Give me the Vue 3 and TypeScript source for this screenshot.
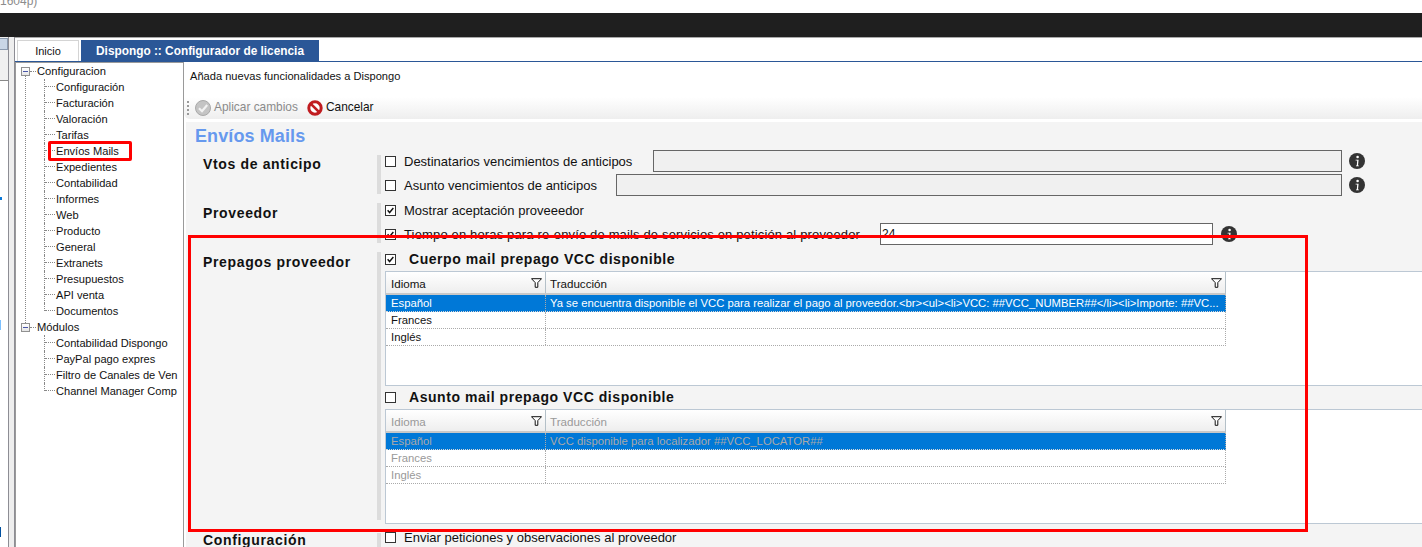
<script setup lang="ts">
const configItems: string[] = ['Configuración','Facturación','Valoración','Tarifas','Envíos Mails','Expedientes','Contabilidad','Informes','Web','Producto','General','Extranets','Presupuestos','API venta','Documentos']
const moduleItems: string[] = ['Contabilidad Dispongo','PayPal pago expres','Filtro de Canales de Ven','Channel Manager Comp']
const rows: string[] = ['Español','Frances','Inglés']
const body = 'Ya se encuentra disponible el VCC para realizar el pago al proveedor.<br><ul><li>VCC: ##VCC_NUMBER##</li><li>Importe: ##VC...'
const subject = 'VCC disponible para localizador ##VCC_LOCATOR##'
const grids = [
  { title: 'Cuerpo mail prepago VCC disponible', checked: true, disabled: false, text: body },
  { title: 'Asunto mail prepago VCC disponible', checked: false, disabled: true, text: subject },
]
</script>

<template>
  <div class="app">
    <div class="titlebar"><span>1604p)</span></div>
    <div class="darkbar"></div>
    <div class="workspace">
      <aside class="dock">
        <div class="dock-head"><span class="dock-close"></span></div>
        <div class="dock-body">
          <i class="mark m1"></i><i class="mark m2"></i><i class="mark m3"></i>
        </div>
      </aside>
      <div class="splitter"></div>
      <div class="main">
        <div class="tabs">
          <div class="tab">Inicio</div>
          <div class="tab active">Dispongo :: Configurador de licencia</div>
        </div>
        <div class="panes">
          <nav class="tree">
            <div class="root has-line">
              <span class="expander"></span><span>Configuracion</span>
            </div>
            <ul class="children cfg">
              <li v-for="item in configItems" :key="item">{{ item }}</li>
            </ul>
            <div class="root">
              <span class="expander"></span><span>Módulos</span>
            </div>
            <ul class="children">
              <li v-for="item in moduleItems" :key="item">{{ item }}</li>
            </ul>
          </nav>
          <section class="content">
            <p class="desc">Añada nuevas funcionalidades a Dispongo</p>
            <div class="toolbar">
              <span class="grip"></span>
              <svg class="tool-icon" viewBox="0 0 16 16">
                <circle cx="8" cy="8" r="7.5" fill="#c4c4c4" stroke="#a8a8a8" />
                <path d="M4 8.2 7 11.2 12.2 5" fill="none" stroke="#f2f2f2" stroke-width="2.2" />
              </svg>
              <span class="tool-label muted">Aplicar cambios</span>
              <svg class="tool-icon cancel" viewBox="0 0 16 16">
                <circle cx="8" cy="8" r="6.2" fill="#fff" stroke="#c01c20" stroke-width="3" />
                <path d="M3.6 3.6 12.4 12.4" stroke="#c01c20" stroke-width="2.6" />
              </svg>
              <span class="tool-label">Cancelar</span>
            </div>
            <div class="sheet">
              <h2 class="sheet-title">Envíos Mails</h2>

              <div class="section">
                <div class="label">Vtos de anticipo</div>
                <div class="bar b1"></div>
                <div class="fields">
                  <div class="row">
                    <span class="check"></span>
                    <span class="text">Destinatarios vencimientos de anticipos</span>
                    <input class="input off i1" disabled />
                    <svg class="info" viewBox="0 0 16 16"><circle cx="8" cy="8" r="8" fill="#333" /><circle cx="8.6" cy="4" r="1.3" fill="#fff" /><path d="M6.6 6.8H9.6L9 12.4H9.9V13.2H7V12.4H7.8L8.2 7.6H6.6Z" fill="#fff" /></svg>
                  </div>
                  <div class="row">
                    <span class="check"></span>
                    <span class="text">Asunto vencimientos de anticipos</span>
                    <input class="input off i2" disabled />
                    <svg class="info" viewBox="0 0 16 16"><circle cx="8" cy="8" r="8" fill="#333" /><circle cx="8.6" cy="4" r="1.3" fill="#fff" /><path d="M6.6 6.8H9.6L9 12.4H9.9V13.2H7V12.4H7.8L8.2 7.6H6.6Z" fill="#fff" /></svg>
                  </div>
                </div>
              </div>

              <div class="section">
                <div class="label">Proveedor</div>
                <div class="bar b2"></div>
                <div class="fields">
                  <div class="row">
                    <span class="check on"><svg viewBox="0 0 11 11"><path d="M2 5.2 4.4 8 9 2.4" fill="none" stroke="#111" stroke-width="1.7" /></svg></span>
                    <span class="text">Mostrar aceptación proveeedor</span>
                  </div>
                  <div class="row">
                    <span class="check on"><svg viewBox="0 0 11 11"><path d="M2 5.2 4.4 8 9 2.4" fill="none" stroke="#111" stroke-width="1.7" /></svg></span>
                    <span class="text wide">Tiempo en horas para re-envío de mails de servicios en petición al proveedor</span>
                    <input class="input i3" value="24" />
                    <svg class="info i-low" viewBox="0 0 16 16"><circle cx="8" cy="8" r="8" fill="#333" /><circle cx="8.6" cy="4" r="1.3" fill="#fff" /><path d="M6.6 6.8H9.6L9 12.4H9.9V13.2H7V12.4H7.8L8.2 7.6H6.6Z" fill="#fff" /></svg>
                  </div>
                </div>
              </div>

              <div class="section third">
                <div class="label">Prepagos proveedor</div>
                <div class="bar b3"></div>
                <div class="fields">
                  <template v-for="g in grids" :key="g.title">
                    <div class="row grid-head">
                      <span class="check" :class="{ on: g.checked }"><svg v-if="g.checked" viewBox="0 0 11 11"><path d="M2 5.2 4.4 8 9 2.4" fill="none" stroke="#111" stroke-width="1.7" /></svg></span>
                      <strong class="grid-title">{{ g.title }}</strong>
                    </div>
                    <div class="grid-band">
                      <div class="grid" :class="{ disabled: g.disabled }">
                        <div class="grid-row header">
                          <div class="cell c1"><span>Idioma</span>
                            <svg class="funnel" viewBox="0 0 11 10"><path d="M.5 .7H10.5L6.8 4.6V9.3H4.2V4.6Z" fill="#fff" stroke="#111" /></svg>
                          </div>
                          <div class="cell c2"><span>Traducción</span>
                            <svg class="funnel" viewBox="0 0 11 10"><path d="M.5 .7H10.5L6.8 4.6V9.3H4.2V4.6Z" fill="#fff" stroke="#111" /></svg>
                          </div>
                        </div>
                        <div v-for="(r, i) in rows" :key="r" class="grid-row data" :class="{ selected: i === 0 }">
                          <div class="cell c1">{{ r }}</div>
                          <div class="cell c2">{{ i === 0 ? g.text : '' }}</div>
                        </div>
                      </div>
                    </div>
                  </template>
                </div>
              </div>

              <div class="section last">
                <div class="label">Configuración</div>
                <div class="bar b4"></div>
                <div class="fields">
                  <div class="row">
                    <span class="check"></span>
                    <span class="text">Enviar peticiones y observaciones al proveedor</span>
                  </div>
                </div>
              </div>
            </div>
          </section>
        </div>
      </div>
      <div class="callout big"></div>
      <div class="callout small"></div>
    </div>
  </div>
</template>

<style>
html, body { margin: 0; background: #fff; overflow: hidden; }
</style>

<style scoped>
.app { position: relative; width: 1422px; height: 547px; overflow: hidden; background: #fff; color: #111; font: 12px/16px "Liberation Sans", Arial, sans-serif; }
.titlebar { height: 13px; overflow: hidden; color: #8c8c8c; font-size: 12px; }
.titlebar span { display: block; margin-top: -7px; line-height: 16px; }
.darkbar { height: 24px; background: #1f1f1f; }
.workspace { display: flex; height: 510px; }
.dock { width: 8px; display: flex; flex-direction: column; }
.dock-head { height: 43px; background: #f0f0f0; padding-top: 1px; box-sizing: border-box; }
.dock-close { display: block; width: 8px; height: 12px; background: #c9d6e6; border: 1px solid #8b9aae; border-left: 0; box-sizing: border-box; }
.dock-body { flex: 1; border-top: 1px solid #888; display: flex; flex-direction: column; }
.mark { display: block; width: 1px; }
.m1 { height: 3px; margin-top: 116px; background: #0a78d8; width: 2px; }
.m2 { height: 10px; margin-top: 120px; background: #7cc0ff; }
.m3 { height: 10px; margin-top: 197px; background: #0050a0; }
.splitter { width: 5px; background: #eeeeee; border-left: 1px solid #8d8d94; border-right: 1px solid #8d8d94; }
.main { flex: 1; min-width: 0; display: flex; flex-direction: column; border-top: 1px solid #a8a8a8; }
.tabs { height: 24px; box-sizing: border-box; display: flex; gap: 2px; padding: 2px 0 0 2px; border-bottom: 1px solid #2b5797; }
.tab { width: 62px; box-sizing: border-box; border: 1px solid #d4d4d4; border-bottom: 0; text-align: center; line-height: 21px; font-size: 11px; }
.tab.active { width: 238px; background: #2b5797; border-color: #2b5797; color: #fff; font-weight: bold; font-size: 11.85px; }
.panes { flex: 1; min-height: 0; display: flex; }
.tree { width: 169px; flex: none; box-sizing: border-box; border: 1px solid #9a9a9a; border-bottom: 0; padding-top: 0; position: relative; overflow: hidden; }
.root { height: 16px; display: flex; align-items: center; padding-left: 5px; position: relative; font-size: 11.2px; white-space: nowrap; }
.expander { width: 9px; height: 9px; box-sizing: border-box; border: 1px solid #919191; background: linear-gradient(#fff, #e6e6e6); margin-right: 7px; position: relative; flex: none; }
.expander::before { content: ""; position: absolute; left: 1px; right: 1px; top: 3px; height: 1px; background: #4a56a8; }
.expander::after { content: ""; position: absolute; left: 8px; width: 6px; top: 3px; border-top: 1px dotted #888; }
.has-line::after { content: ""; position: absolute; left: 9px; top: 12px; height: 248px; border-left: 1px dotted #888; }
.children { list-style: none; margin: 0; padding: 0 0 0 40px; font-size: 11.1px; }
.children li { position: relative; height: 16px; line-height: 16px; white-space: nowrap; }
.children li::before { content: ""; position: absolute; left: -11px; top: 7px; width: 10px; border-top: 1px dotted #888; }
.children li::after { content: ""; position: absolute; left: -12px; top: 0; height: 16px; border-left: 1px dotted #888; }
.children li:last-child::after { height: 8px; }
.content { flex: 1; min-width: 0; display: flex; flex-direction: column; }
.desc { margin: 0; height: 35px; box-sizing: border-box; padding: 6px 0 0 6px; font-size: 11.1px; line-height: 16px; }
.toolbar { height: 22px; margin-bottom: 3px; display: flex; align-items: center; background: linear-gradient(#fff, #eeeeee); border-radius: 0 0 0 6px; padding-left: 3px; }
.grip { width: 2px; height: 15px; margin-right: 6px; background: repeating-linear-gradient(#9a9a9a 0 2px, transparent 2px 4px); }
.tool-icon { width: 16px; height: 16px; flex: none; margin-top: -1px; }
.tool-icon.cancel { margin-left: 9px; }
.tool-label { margin-left: 3px; font-size: 11.9px; line-height: 14px; margin-bottom: 2px; white-space: nowrap; }
.muted { color: #8b8b8b; }
.sheet { flex: 1; min-height: 0; margin-left: 2px; background: #f4f4f4; }
.sheet-title { margin: 0; height: 28px; padding-left: 9px; color: #6699ee; font-size: 18px; letter-spacing: 0.1px; line-height: 29px; font-weight: bold; }
.section { display: flex; margin-bottom: 1px; }
.section.third { margin-bottom: 2px; }
.label { width: 191px; flex: none; box-sizing: border-box; padding: 6px 0 0 17px; font-size: 14px; letter-spacing: 0.65px; font-weight: bold; line-height: 16px; color: #111; }
.section.last { height: 21px; overflow: hidden; }
.bar { width: 4px; flex: none; background: #dcdcdc; }
.b1 { margin: 5px 0 4px; }
.b2 { margin: 4px 0 4px; }
.b3 { margin: 4px 0 4px; }
.b4 { margin: 7px 0 0; }
.fields { flex: 1; min-width: 0; padding-left: 4px; }
.row { height: 24px; box-sizing: border-box; display: flex; align-items: flex-start; }
.check { width: 11px; height: 11px; margin-top: 6px; flex: none; box-sizing: border-box; border: 1px solid #333; background: #fff; display: block; }
.check svg { display: block; width: 9px; height: 9px; }
.text { margin-left: 8px; line-height: 23px; white-space: nowrap; font-size: 13px; }
.text.wide { letter-spacing: 0.15px; }
.input { height: 22px; box-sizing: border-box; border: 1px solid #666; background: #fff; padding: 0 1px; font: 12px "Liberation Sans", Arial, sans-serif; color: #111; outline: none; border-radius: 0; }
.input.off { background: #f0f0f0; }
.i1 { width: 689px; margin-left: 21px; }
.i2 { width: 726px; margin-left: 19px; }
.i3 { width: 333px; margin-left: 20px; }
.info { width: 16px; height: 16px; flex: none; margin: 3px 0 0 7px; }
.info.i-low { margin-left: 8px; }
.grid-head { height: 23px; }
.grid-title { margin-left: 13px; font-size: 14px; letter-spacing: 0.55px; line-height: 22px; white-space: nowrap; color: #111; }
.grid-band { height: 115px; box-sizing: border-box; background: #fff; border-top: 1px solid #bcc8d4; border-bottom: 1px solid #bcc8d4; }
.grid { width: 841px; height: 100%; box-sizing: border-box; border-left: 1px solid #bcc8d4; }
.grid-row { display: flex; }
.header { height: 23px; box-sizing: border-box; background: linear-gradient(#fff, #eeeeee); border-bottom: 2px solid #c8c8c8; border-right: 1px solid #b4c0c8; }
.cell { box-sizing: border-box; padding-left: 5px; white-space: nowrap; overflow: hidden; font-size: 11.3px; }
.c1 { width: 160px; border-right: 1px dotted #aaa; }
.c2 { flex: 1; min-width: 0; padding-left: 4px; }
.header .cell { display: flex; justify-content: space-between; align-items: center; padding-top: 2px; padding-right: 3px; font-size: 11.6px; }
.header .c1 { border-right: 1px solid #b4c0c8; }
.funnel { width: 11px; height: 10px; flex: none; margin-top: -2px; }
.data { height: 17px; line-height: 16px; box-sizing: border-box; border-bottom: 1px dotted #aaa; border-right: 1px dotted #aaa; }
.selected { background: #0078d7; color: #fff; border-bottom-color: #d8d8d8; }
.disabled { color: #999; }
.disabled .selected { color: #a9a9a9; }
.callout { position: absolute; box-sizing: border-box; border: 3px solid #ff0000; pointer-events: none; }
.big { left: 188px; top: 235px; width: 1120px; height: 297px; }
.small { left: 48px; top: 141px; width: 84px; height: 20px; border-radius: 2px; }
</style>
